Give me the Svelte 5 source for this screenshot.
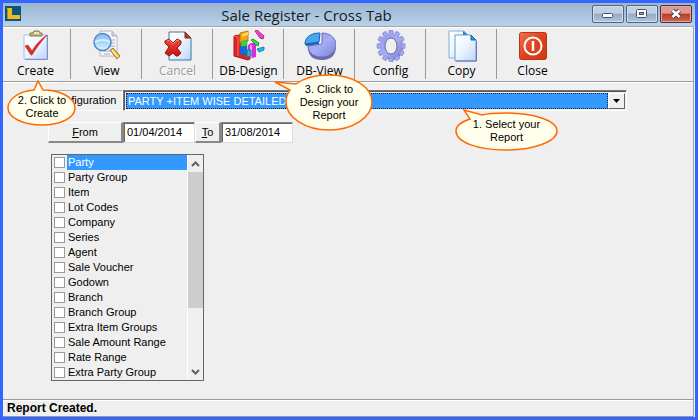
<script lang="ts">
  const tools = [
    { id: 'create', label: 'Create' },
    { id: 'view', label: 'View' },
    { id: 'cancel', label: 'Cancel', disabled: true },
    { id: 'design', label: 'DB-Design' },
    { id: 'dbview', label: 'DB-View' },
    { id: 'config', label: 'Config' },
    { id: 'copy', label: 'Copy' },
    { id: 'close', label: 'Close' },
  ]

  const fields = [
    'Party',
    'Party Group',
    'Item',
    'Lot Codes',
    'Company',
    'Series',
    'Agent',
    'Sale Voucher',
    'Godown',
    'Branch',
    'Branch Group',
    'Extra Item Groups',
    'Sale Amount Range',
    'Rate Range',
    'Extra Party Group',
  ]

  const teeth = [0, 30, 60, 90, 120, 150, 180, 210, 240, 270, 300, 330]

  let current = $state('Party')
  let from = $state('01/04/2014')
  let to = $state('31/08/2014')
</script>

<div class="window">
  <header class="titlebar">
    <svg class="logo" viewBox="0 0 16 15" aria-hidden="true">
      <rect width="16" height="15" fill="#06577f" />
      <path d="M2 2h5v7h8v4H3V4H2z" fill="#f5b914" />
      <path d="M2 3h1v10H2z" fill="#a88a38" />
    </svg>
    <h1>Sale Register - Cross Tab</h1>
    <div class="controls">
      <button aria-label="Minimize">
        <svg viewBox="0 0 30 16"><rect x="9.5" y="7.5" width="10" height="4" rx="1" fill="#fff" stroke="#4a5360" /></svg>
      </button>
      <button aria-label="Maximize">
        <svg viewBox="0 0 30 16">
          <rect x="9.5" y="3.5" width="10" height="8" rx="1" fill="#fff" stroke="#4a5360" />
          <rect x="12.5" y="6.5" width="4" height="2" fill="#8fa7c2" stroke="#4a5360" />
        </svg>
      </button>
      <button class="close" aria-label="Close window">
        <svg viewBox="0 0 30 16">
          <path d="M11.5 4.5l7 6.5m0-6.5l-7 6.5" stroke="#4a3a44" stroke-width="4.5" />
          <path d="M11.5 4.5l7 6.5m0-6.5l-7 6.5" stroke="#fff" stroke-width="2.6" />
        </svg>
      </button>
    </div>
  </header>

  <nav class="toolbar">
    {#each tools as tool}
      <button class="tool" disabled={tool.disabled}>
        <svg viewBox="0 0 32 32" aria-hidden="true">
          {#if tool.id === 'create'}
            <path d="M4 5h23v24H4z" fill="url(#paper)" stroke="#a8b9ea" />
            <path d="M27.500 5v24.500H5" fill="none" stroke="#7d8fca" />
            <path d="M10 3h3l1-2h5l1 2h2v3H10z" fill="#c8b47c" stroke="#88774d" />
            <path d="M14 3h5" stroke="#f4e6b4" stroke-width="2" />
            <path d="M5 16l3-1 4 6C16 14 21 9 27 5 21 12 16 18 12 25h-1z" fill="#e42c20" stroke="#bd2824" stroke-width=".6" />
          {:else if tool.id === 'view'}
            <path d="M9 1h12l5 5v20H9z" fill="#f5f5fb" stroke="#b6b6c9" />
            <path d="M21 1v5h5" fill="#d6d6e3" stroke="#a9a9c0" />
            <path d="M19 10h5m-5 3h5m-5 3h5m-11 5h9m-9 3h6" stroke="#aaaac2" />
            <path d="M19 20l3-2 7 8-3 3z" fill="#f0b838" stroke="#9b7440" />
            <path d="M21 20l6 7" stroke="#fff0a0" stroke-width="1.500" />
            <circle cx="11.500" cy="12" r="8.500" fill="url(#lens)" stroke="#5287c9" stroke-width="1.500" />
            <path d="M4 12q8-4 15 0" fill="none" stroke="#effbff" stroke-width="2" opacity=".7" />
          {:else if tool.id === 'cancel'}
            <path d="M7 2h16l6 6v22H7z" fill="url(#paper)" stroke="#3b789e" />
            <path d="M23 2v6h6z" fill="#b93922" stroke="#7f2b21" />
            <path d="M3 11l4-2 4 4 4-4 4 2v3l-4 4 4 5-3 3h-2l-3-3-4 3-4-3 4-6-4-4z" fill="url(#red)" stroke="#9b1515" />
            <path d="M5 11l2-1 4 4 4-4 2 1" fill="none" stroke="#ff8b78" />
          {:else if tool.id === 'design'}
            <path d="M1 6l11-2v19l5 2v4l-2 1L1 26z" fill="#df2422" stroke="#a41820" />
            <path d="M1 6l4 1v19" fill="none" stroke="#ff6a58" />
            <path d="M7 3l8-2v10l-8 2z" fill="#f5a51c" stroke="#bb7b12" />
            <path d="M9 4l6-2v3l-6 2z" fill="#ffdc3e" />
            <path d="M8 12l6-2v6l-6 2z" fill="#35d43e" stroke="#1d9d32" stroke-width=".5" />
            <path d="M7 17l7-1v9l-7-1z" fill="#1768e5" stroke="#1554a5" stroke-width=".5" />
            <path d="M15 15l3-2h5v14l-4 1-4-2z" fill="#d82bdc" />
            <path d="M17 15h2v12h-2z" fill="#ffa8fc" />
            <path d="M14 20h4v6l-4 1z" fill="#20b6cd" stroke="#1578a4" />
            <path d="M22 1l2-1 7 6-1 3-3-1z" fill="#f040c6" stroke="#b62799" />
            <path d="M18 10l2-1 6 4-1 3-2-1z" fill="#33df45" stroke="#159b38" />
            <path d="M24 19l7-2v3l-5 2z" fill="#24b8ed" stroke="#1486b5" />
          {:else if tool.id === 'dbview'}
            <path d="M4 17c0 9 5 13 14 13s14-5 14-14z" fill="#686ba8" />
            <path d="M4 16l14-2V3c8 0 14 5 14 12 0 6-6 12-14 12S4 23 4 16z" fill="url(#pie)" stroke="#6b70c4" />
            <path d="M1 14C1 7 7 3 16 3l-1 9z" fill="#48a7f1" stroke="#1766b0" />
            <path d="M1 14l14-2v2L2 16z" fill="#1763b1" />
          {:else if tool.id === 'config'}
            <ellipse cx="17" cy="17" rx="11" ry="13" fill="#777bb0" />
            <g transform="translate(2 0) scale(.88 1)">
              <g fill="url(#pie)" stroke="#7476bb" stroke-width=".5">
                {#each teeth as angle}
                  <rect x="13.500" y="0" width="5" height="6" rx="1" transform="rotate({angle} 16 16)" />
                {/each}
              </g>
              <circle cx="16" cy="16" r="12.500" fill="url(#pie)" />
            </g>
            <ellipse cx="16" cy="16" rx="6" ry="8" fill="#efefef" stroke="#686ba7" />
          {:else if tool.id === 'copy'}
            <path d="M3 1h15l4 4v23H3z" fill="url(#paper)" stroke="#82aedc" />
            <path d="M17 1v4h5z" fill="#1883c8" />
            <path d="M9 5h16l5 5v21H9z" fill="url(#paper)" stroke="#699bd5" />
            <path d="M25 5v5h5z" fill="#18a4e2" stroke="#1767a3" />
            <path d="M30.500 11v20H10" fill="none" stroke="#6779af" />
          {:else}
            <rect x="2.500" y="2.500" width="27" height="27" rx="2" fill="url(#power)" stroke="#b93516" />
            <circle cx="16" cy="16" r="8.500" fill="none" stroke="#fff" stroke-width="2" />
            <path d="M16 11v10" stroke="#fff" stroke-width="2.500" />
          {/if}
        </svg>
        <span>{tool.label}</span>
      </button>
    {/each}
  </nav>

  <main>
    <div class="row">
      <label class="caption" for="config">Configuration</label>
      <div class="combo">
        <select id="config">
          <option>PARTY +ITEM WISE DETAILED</option>
        </select>
        <span class="arrow"><svg viewBox="0 0 7 4" aria-hidden="true"><path d="M0 0h7L3.500 4z" /></svg></span>
      </div>
    </div>

    <div class="row dates">
      <button class="from"><u>F</u>rom</button>
      <input aria-label="From" bind:value={from} />
      <button class="to"><u>T</u>o</button>
      <input aria-label="To" bind:value={to} />
    </div>

    <div class="listbox">
      <div class="items">
        {#each fields as field}
          <label class:current={field === current}>
            <input type="checkbox" onfocus={() => (current = field)} />
            <span>{field}</span>
          </label>
        {/each}
      </div>
      <div class="scrollbar" aria-hidden="true">
        <svg viewBox="0 0 15 17"><path d="M4 11l3.500-3.500L11 11" /></svg>
        <div class="thumb"></div>
        <svg viewBox="0 0 15 17"><path d="M4 7l3.500 3.500L11 7" /></svg>
      </div>
    </div>
  </main>

  <footer>Report Created.</footer>

  <div class="callout step-create">
    <svg viewBox="0 0 70 48" aria-hidden="true">
      <path d="M31 1l5 9C54 10 68 18 68 28c0 10-15 17-33 17S1 38 1 28C1 19 12 11 27 10z" />
    </svg>
    <p>2. Click to<br />Create</p>
  </div>
  <div class="callout step-design">
    <svg viewBox="0 0 99 58" aria-hidden="true">
      <path d="M1 8l21 2C31 3 42 1 55 1c24 0 43 12 43 27S79 56 55 56 12 43 12 28c0-5 1-8 4-12z" />
    </svg>
    <p>3. Click to<br />Design your<br />Report</p>
  </div>
  <div class="callout step-select">
    <svg viewBox="0 0 103 42" aria-hidden="true">
      <path d="M9 1l18 5C34 4 42 4 51 4c29 0 51 8 51 18S80 41 51 41 1 33 1 22c0-5 5-9 14-12z" />
    </svg>
    <p>1. Select your<br />Report</p>
  </div>
</div>

<svg class="defs" aria-hidden="true">
  <defs>
    <linearGradient id="paper" x2="1" y2="1">
      <stop offset="0" stop-color="#fff" />
      <stop offset=".45" stop-color="#edf6ff" />
      <stop offset="1" stop-color="#bcd4fa" />
    </linearGradient>
    <linearGradient id="lens" x2="0" y2="1">
      <stop offset="0" stop-color="#8dbdf0" />
      <stop offset=".5" stop-color="#9ed3fa" />
      <stop offset="1" stop-color="#dcfaff" />
    </linearGradient>
    <linearGradient id="pie" x2="1" y2="1">
      <stop offset="0" stop-color="#9498e4" />
      <stop offset=".5" stop-color="#a7acf6" />
      <stop offset="1" stop-color="#7d80cf" />
    </linearGradient>
    <linearGradient id="red" x2="0" y2="1">
      <stop offset="0" stop-color="#f34b37" />
      <stop offset="1" stop-color="#c41212" />
    </linearGradient>
    <linearGradient id="power" x2="1" y2="1">
      <stop offset="0" stop-color="#f0734f" />
      <stop offset=".5" stop-color="#df421d" />
      <stop offset="1" stop-color="#cc3716" />
    </linearGradient>
  </defs>
</svg>

<style>
  .window,
  .window * {
    box-sizing: border-box;
  }
  .window {
    position: relative;
    display: flex;
    flex-direction: column;
    min-height: 100vh;
    border: 3px solid #3366ff;
    background: #efefef;
    color: #000;
    font: 11px/13px 'Liberation Sans', Arial, sans-serif;
  }
  .defs {
    position: absolute;
    width: 0;
    height: 0;
  }
  button,
  input,
  select {
    margin: 0;
    font: inherit;
    color: inherit;
  }

  .titlebar {
    display: flex;
    height: 23px;
    padding: 2px 3px 0 2px;
    background: linear-gradient(#9bb5cf, #b9d1ea);
  }
  .logo {
    width: 16px;
    height: 15px;
    margin-top: 1px;
  }
  h1 {
    flex: 1;
    margin: 0;
    font: 15px/20px 'Open Sans', 'Noto Sans', sans-serif;
    text-align: center;
    color: #161c24;
  }
  .controls {
    display: flex;
    gap: 2px;
  }
  .controls button {
    width: 32px;
    height: 18px;
    padding: 0;
    border: 1px solid #566579;
    border-radius: 2px;
    background: linear-gradient(#bfd0e2 45%, #91abc6 50%, #b0c8df);
    box-shadow: inset 0 0 0 1px #cfdeed;
  }
  .controls .close {
    border-color: #562831;
    background: linear-gradient(#dc9a91 45%, #b93a27 50%, #ce6b52);
    box-shadow: inset 0 0 0 1px #e0aaa2;
  }
  .controls svg {
    display: block;
    width: 30px;
    height: 16px;
  }

  .toolbar {
    display: flex;
    height: 56px;
    margin-right: 1px;
    border-top: 1px solid #a5a5a5;
    border-right: 1px solid #9da3a8;
    border-bottom: 1px solid #9d9d9d;
    box-shadow: inset 0 1px #fff, 0 1px #fff;
  }
  .tool {
    display: flex;
    flex-direction: column;
    align-items: center;
    width: 71px;
    padding: 3px 6px 0 0;
    border: 0;
    background: linear-gradient(#999, #999) right 3px top 2px / 1px 50px no-repeat;
    font: 12px/18px 'Open Sans', 'Noto Sans', sans-serif;
    white-space: nowrap;
  }
  .tool:last-child {
    background: none;
  }
  .tool:disabled {
    color: #9a9a92;
    text-shadow: 1px 1px #fff;
  }
  .tool svg {
    width: 32px;
    height: 32px;
  }

  main {
    flex: 1;
    padding: 8px 66px 17px 45px;
    border-right: 1px solid #9da3a8;
    margin-right: 1px;
  }
  .row {
    display: flex;
    height: 21px;
  }
  .caption {
    width: 75px;
    padding: 3px 2px;
    border: 1px solid #aaa;
    border-right-color: #fff;
    border-bottom-color: #fff;
  }
  .combo {
    display: flex;
    flex: 1;
    border: 1px solid #777;
    border-right-color: #fff;
    border-bottom-color: #fff;
    box-shadow: inset 1px 1px #555;
    padding: 2px 1px 1px 2px;
  }
  select {
    flex: 1;
    min-width: 0;
    padding: 0 1px;
    border: 1px dotted #222;
    border-radius: 0;
    outline: 0;
    appearance: none;
    background: #3399ff;
    color: #fff;
  }
  .arrow {
    display: grid;
    place-items: center;
    width: 17px;
    border: 1px solid #fff;
    border-right-color: #666;
    border-bottom-color: #666;
    background: #efefef;
  }
  .arrow svg {
    width: 7px;
    height: 4px;
  }
  .dates {
    margin-top: 11px;
  }
  .dates button {
    padding: 0;
    border: 1px solid #fff;
    border-right: 2px solid #888;
    border-bottom: 2px solid #888;
    background: #efefef;
  }
  .dates .from {
    width: 75px;
  }
  .dates .to {
    width: 26px;
  }
  .dates input {
    width: 72px;
    padding: 0 3px;
    border: 1px solid #888;
    border-right-color: #ddd;
    border-bottom-color: #ddd;
    background: #fff;
    box-shadow: inset 1px 1px #666;
  }

  .listbox {
    display: flex;
    width: 153px;
    margin: 11px 0 0 3px;
    border: 1px solid #666;
  }
  .items {
    flex: 1;
  }
  .items label {
    display: flex;
    height: 15px;
    padding-left: 2px;
    gap: 2px;
    line-height: 15px;
  }
  .items span {
    flex: 1;
    padding-left: 1px;
  }
  .items .current span {
    background: #3399ff;
    color: #fff;
  }
  .items input {
    appearance: none;
    width: 11px;
    height: 11px;
    margin-top: 2px;
    border: 1px solid #999;
    background: #fff;
  }
  .items input:checked {
    background: #3399ff;
  }
  .scrollbar {
    display: flex;
    flex-direction: column;
    width: 16px;
    border-left: 1px solid #fff;
  }
  .scrollbar svg {
    width: 15px;
    height: 17px;
    fill: none;
    stroke: #606060;
    stroke-width: 2;
  }
  .thumb {
    height: 136px;
    margin-bottom: auto;
    background: #cdcdcd;
  }

  footer {
    height: 18px;
    padding: 0 4px;
    border-top: 1px solid #999;
    border-right: 1px solid #9da3a8;
    border-bottom: 1px solid #999;
    margin-right: 1px;
    box-shadow: inset 0 1px #fff;
    font-size: 12px;
    font-weight: bold;
    line-height: 17px;
  }

  /* help balloons float over the form */
  .callout {
    position: absolute;
    text-align: center;
    pointer-events: none;
  }
  .callout svg {
    display: block;
    width: 100%;
    height: 100%;
    fill: #ffffeb;
    stroke: #ff6a00;
    stroke-width: 1.5;
  }
  .callout p {
    position: absolute;
    inset: auto 0 0;
    margin: 0;
    white-space: nowrap;
  }
  .step-create {
    top: 77px;
    left: 4px;
    width: 70px;
    height: 48px;
  }
  .step-create p {
    bottom: 8px;
  }
  .step-design {
    top: 71px;
    left: 271px;
    width: 99px;
    height: 58px;
  }
  .step-design p {
    bottom: 10px;
    padding-left: 11px;
  }
  .step-select {
    top: 106px;
    left: 452px;
    width: 103px;
    height: 42px;
  }
  .step-select p {
    bottom: 7px;
  }
</style>
